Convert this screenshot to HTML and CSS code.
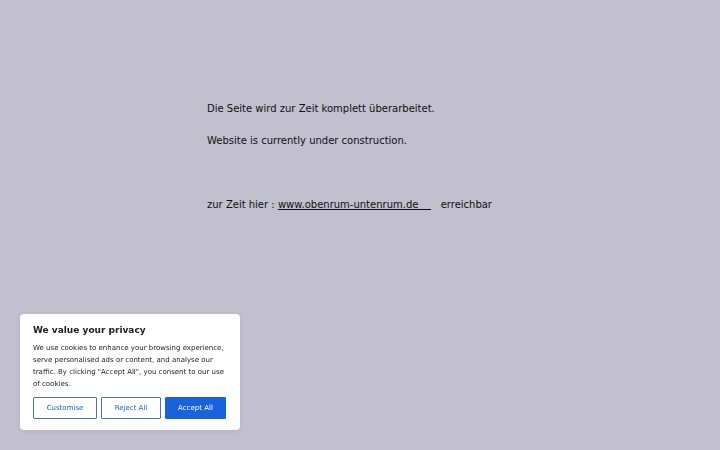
FILE: index.html
```html
<!DOCTYPE html>
<html lang="de">
<head>
<meta charset="utf-8">
<title>obenrum-untenrum</title>
<link rel="stylesheet" href="styles.css">
</head>
<body>
<main class="content">
  <p class="line">Die Seite wird zur Zeit komplett überarbeitet.</p>
  <p class="line">Website is currently under construction.</p>
  <p class="line line-far">zur Zeit hier : <a class="link" href="#">www.obenrum-untenrum.de&nbsp;&nbsp;&nbsp;&nbsp;</a>&nbsp;&nbsp;&nbsp;erreichbar</p>
</main>
<div class="cookie">
  <h2 class="cookie-title">We value your privacy</h2>
  <p class="cookie-text">We use cookies to enhance your browsing experience, serve personalised ads or content, and analyse our traffic. By clicking "Accept All", you consent to our use of cookies.</p>
  <div class="cookie-actions">
    <button class="btn btn-outline btn-custom">Customise</button>
    <button class="btn btn-outline btn-reject">Reject All</button>
    <button class="btn btn-solid btn-accept">Accept All</button>
  </div>
</div>
</body>
</html>
```
FILE: styles.css
```css
html, body {
  margin: 0;
  padding: 0;
}
body {
  background: #c2bfcf;
  font-family: "DejaVu Sans", "Liberation Sans", sans-serif;
  color: #111;
  width: 720px;
  height: 450px;
  overflow: hidden;
}
.content {
  padding: 101px 0 0 207px;
}
.line {
  margin: 0 0 16px 0;
  font-size: 10px;
  line-height: 16px;
}
.line-far {
  margin-top: 48px;
}
.link {
  color: #111;
  text-decoration: underline;
}
.cookie {
  position: fixed;
  left: 20px;
  bottom: 20px;
  width: 220px;
  height: 116px;
  box-sizing: border-box;
  background: #fff;
  border-radius: 4px;
  padding: 10px 13px 11px 13px;
  box-shadow: 0 1px 5px rgba(0,0,0,0.08);
}
.cookie-title {
  margin: 0 0 6px 0;
  font-size: 9px;
  line-height: 12px;
  font-weight: bold;
  color: #212121;
}
.cookie-text {
  margin: 0 0 7px 0;
  font-size: 7px;
  line-height: 12px;
  color: #212121;
}
.cookie-actions {
  display: flex;
  gap: 4px;
}
.btn {
  height: 22px;
  box-sizing: border-box;
  font-family: "DejaVu Sans", sans-serif;
  font-size: 7px;
  border-radius: 1px;
  padding: 0;
  cursor: pointer;
}
.btn-outline {
  background: #fff;
  color: #1863dc;
  border: 1px solid #4d74a8;
}
.btn-custom { width: 64px; }
.btn-reject { width: 60px; }
.btn-solid {
  width: 61px;
  background: #1863dc;
  border: 1px solid #1863dc;
  color: #fff;
}
```
